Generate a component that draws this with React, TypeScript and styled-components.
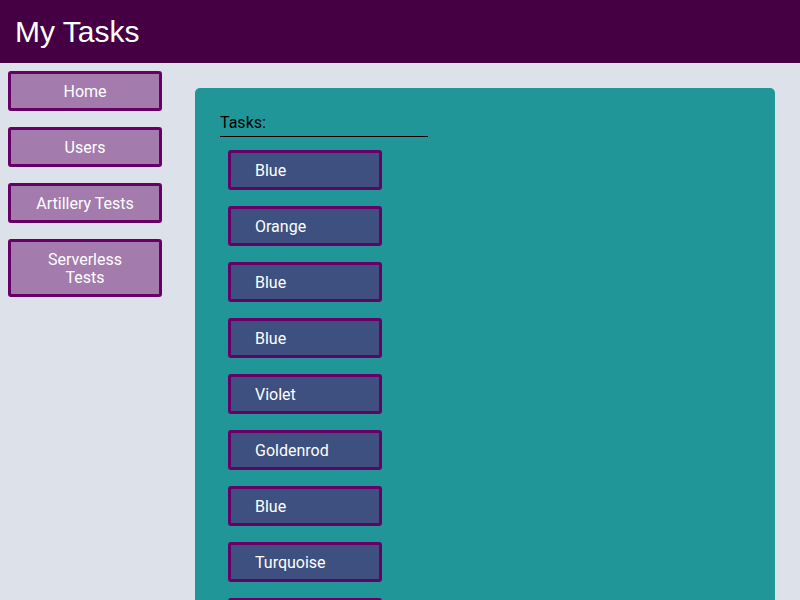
import React from "react";
import styled, { createGlobalStyle } from "styled-components";

const Global = createGlobalStyle`
  html, body { margin: 0; padding: 0; background: #dce1ea; }
  body { font-family: Roboto, "Noto Sans", sans-serif; }
  * { box-sizing: border-box; }
`;

const Page = styled.div`
  height: 600px;
  overflow: hidden;
  display: flex;
  flex-direction: column;
`;

const Header = styled.header`
  height: 63px;
  flex-shrink: 0;
  background: #450044;
  display: flex;
  align-items: center;
  padding-left: 15px;
`;

const Title = styled.h1`
  margin: 0;
  color: #ffffff;
  font-family: "Liberation Sans", Arial, sans-serif;
  font-weight: 400;
  font-size: 30px;
`;

const Body = styled.div`
  display: flex;
  align-items: flex-start;
`;

const Sidebar = styled.nav`
  width: 170px;
  padding: 8px 0 0 8px;
  display: flex;
  flex-direction: column;
  gap: 16px;
`;

const NavButton = styled.button`
  width: 154px;
  min-height: 40px;
  background: #a37bad;
  border: 3px solid #660066;
  border-radius: 3px;
  color: #ffffff;
  font-family: Roboto, "Noto Sans", sans-serif;
  font-size: 16px;
  line-height: 18px;
  padding: 9px 20px 7px;
  text-align: center;
`;

const Panel = styled.main`
  margin: 25px 25px 0 25px;
  flex: 1;
  background: #219698;
  border-radius: 5px;
  padding: 26px 25px 0 25px;
  min-height: 512px;
`;

const Label = styled.div`
  width: 208px;
  color: #000000;
  font-size: 16px;
  line-height: 18px;
  padding-bottom: 4px;
  border-bottom: 1px solid #000000;
`;

const TaskList = styled.div`
  display: flex;
  flex-direction: column;
  gap: 16px;
  padding: 13px 0 0 8px;
`;

const Task = styled.button`
  width: 154px;
  height: 40px;
  flex-shrink: 0;
  background: #3d5080;
  border: 3px solid #660066;
  border-radius: 3px;
  color: #ffffff;
  font-family: Roboto, "Noto Sans", sans-serif;
  font-size: 16px;
  text-align: left;
  padding: 0 0 0 24px;
`;

const navItems = ["Home", "Users", "Artillery Tests", "Serverless Tests"];
const tasks = ["Blue", "Orange", "Blue", "Blue", "Violet", "Goldenrod", "Blue", "Turquoise", "Blue"];

export default function App() {
  return (
    <Page>
      <Global />
      <Header>
        <Title>My Tasks</Title>
      </Header>
      <Body>
        <Sidebar>
          {navItems.map((n) => (
            <NavButton key={n}>{n}</NavButton>
          ))}
        </Sidebar>
        <Panel>
          <Label>Tasks:</Label>
          <TaskList>
            {tasks.map((t, i) => (
              <Task key={i}>{t}</Task>
            ))}
          </TaskList>
        </Panel>
      </Body>
    </Page>
  );
}
